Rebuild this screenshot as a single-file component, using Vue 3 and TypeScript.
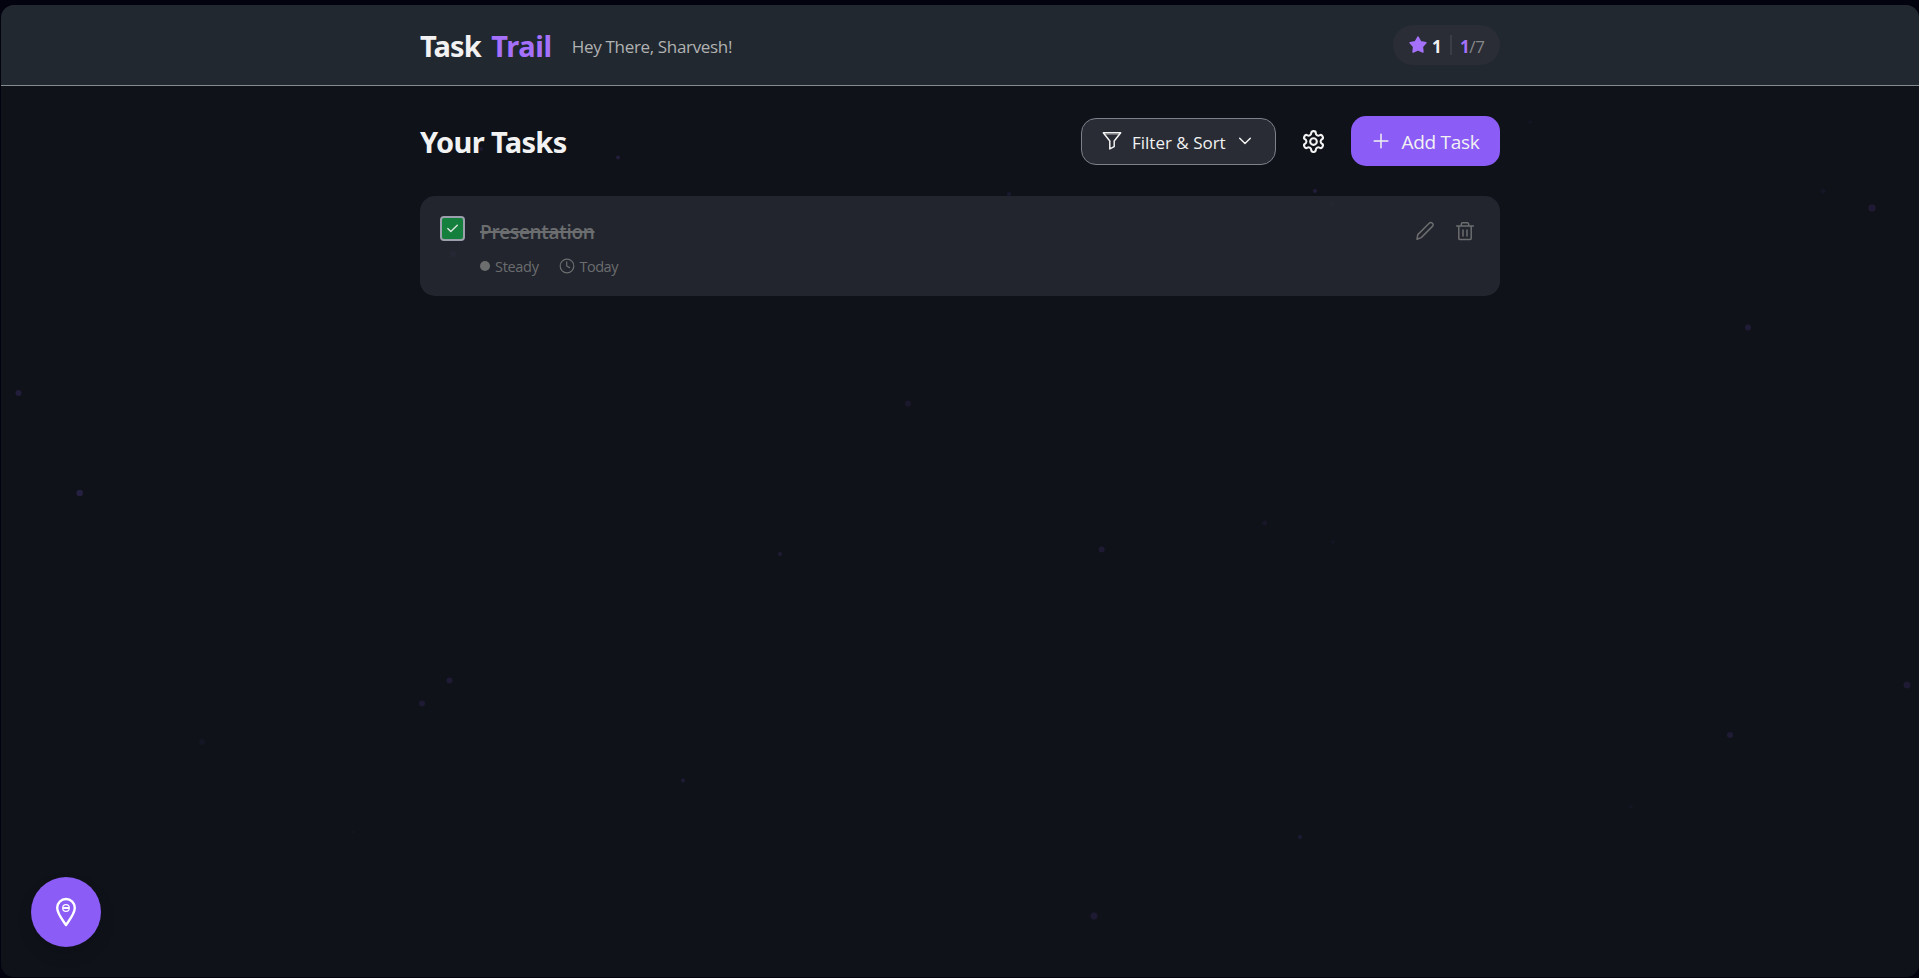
<script setup lang="ts">
interface Particle { x: number; y: number; size: number; alpha: number }

interface Task { id: number; title: string; effort: string; due: string; done: boolean }

const user = 'Sharvesh'
const stars = 1
const completed = 1
const goal = 7

const tasks: Task[] = [
  { id: 1, title: 'Presentation', effort: 'Steady', due: 'Today', done: true },
]

const particles: Particle[] = [
  { x: 18.5, y: 393, size: 6, alpha: 0.15 },
  { x: 79.7, y: 493, size: 6.5, alpha: 0.18 },
  { x: 202, y: 742, size: 6, alpha: 0.05 },
  { x: 353, y: 832, size: 3, alpha: 0.04 },
  { x: 422, y: 703.5, size: 6, alpha: 0.12 },
  { x: 449.5, y: 680.5, size: 6, alpha: 0.13 },
  { x: 453, y: 254, size: 6, alpha: 0.14 },
  { x: 481, y: 149, size: 4, alpha: 0.12 },
  { x: 618, y: 157.5, size: 4, alpha: 0.15 },
  { x: 683, y: 780.5, size: 4, alpha: 0.13 },
  { x: 780, y: 554, size: 4, alpha: 0.13 },
  { x: 908, y: 403.5, size: 6, alpha: 0.09 },
  { x: 1009, y: 194, size: 4, alpha: 0.1 },
  { x: 1094, y: 916, size: 7, alpha: 0.12 },
  { x: 1101.7, y: 549.5, size: 6, alpha: 0.12 },
  { x: 1264.7, y: 523, size: 5, alpha: 0.07 },
  { x: 1300, y: 837, size: 4, alpha: 0.12 },
  { x: 1315, y: 191, size: 4, alpha: 0.15 },
  { x: 1332, y: 204, size: 5, alpha: 0.1 },
  { x: 1333, y: 542, size: 4, alpha: 0.04 },
  { x: 1530, y: 122, size: 4, alpha: 0.04 },
  { x: 1631, y: 806.6, size: 4, alpha: 0.04 },
  { x: 1730, y: 735, size: 6, alpha: 0.13 },
  { x: 1748, y: 327.5, size: 6, alpha: 0.14 },
  { x: 1823, y: 191, size: 5, alpha: 0.06 },
  { x: 1872, y: 208, size: 7.5, alpha: 0.12 },
  { x: 1907, y: 685, size: 7, alpha: 0.12 },
]
</script>

<template>
  <div class="frame">
    <div class="window">
      <svg class="particles" width="1919" height="978" aria-hidden="true">
        <circle
          v-for="(p, i) in particles"
          :key="i"
          :cx="p.x"
          :cy="p.y"
          :r="p.size / 2"
          fill="#8b5cf6"
          :fill-opacity="p.alpha"
        />
      </svg>

      <header class="header">
        <div class="container header-row">
          <h1 class="brand"><span class="brand-a">Task</span> <span class="brand-b">Trail</span></h1>
          <p class="greeting">Hey There, {{ user }}!</p>
          <div class="stats">
            <svg class="star" viewBox="0 0 20 20" width="20" height="20">
              <path d="M10 2.200l2.700 4.700 5.200.9-3.600 3.800.6 5.400-4.900-2.200L5.100 17l.6-5.400L2.100 7.800l5.200-.9z" />
            </svg>
            <b class="star-count">{{ stars }}</b>
            <span class="divider"></span>
            <span class="progress"><b>{{ completed }}</b>/{{ goal }}</span>
          </div>
        </div>
      </header>

      <main class="container main">
        <div class="toolbar">
          <h2 class="heading">Your Tasks</h2>
          <button class="filter" type="button">
            <svg viewBox="0 0 22 22" width="22" height="22">
              <path d="M2.300 2.800h17.400L13.200 11v5.600l-4.400 2.300V11z" />
              <path d="M3.500 4.300h15" class="faint" />
            </svg>
            <span>Filter &amp; Sort</span>
            <svg class="caret" viewBox="0 0 14 14" width="14" height="14">
              <path d="M1.700 4.200L7 9.500l5.300-5.300" />
            </svg>
          </button>
          <button class="gear" type="button" aria-label="Settings">
            <svg viewBox="0 0 24 24" width="25" height="25">
              <path d="M12.220 2h-.44a2 2 0 0 0-2 2v.18a2 2 0 0 1-1 1.730l-.43.25a2 2 0 0 1-2 0l-.15-.08a2 2 0 0 0-2.730.73l-.22.38a2 2 0 0 0 .73 2.730l.15.1a2 2 0 0 1 1 1.720v.51a2 2 0 0 1-1 1.740l-.15.09a2 2 0 0 0-.73 2.730l.22.38a2 2 0 0 0 2.730.73l.15-.08a2 2 0 0 1 2 0l.43.25a2 2 0 0 1 1 1.730V20a2 2 0 0 0 2 2h.44a2 2 0 0 0 2-2v-.18a2 2 0 0 1 1-1.730l.43-.25a2 2 0 0 1 2 0l.15.08a2 2 0 0 0 2.730-.73l.22-.39a2 2 0 0 0-.73-2.730l-.15-.08a2 2 0 0 1-1-1.740v-.5a2 2 0 0 1 1-1.740l.15-.09a2 2 0 0 0 .73-2.730l-.22-.38a2 2 0 0 0-2.730-.73l-.15.08a2 2 0 0 1-2 0l-.43-.25a2 2 0 0 1-1-1.730V4a2 2 0 0 0-2-2z" />
              <circle cx="12" cy="12" r="3.200" />
            </svg>
          </button>
          <button class="add" type="button">
            <svg viewBox="0 0 16 16" width="16" height="16"><path d="M8 1.200v13.600M1.200 8h13.600" /></svg>
            <span>Add Task</span>
          </button>
        </div>

        <article v-for="task in tasks" :key="task.id" class="card">
          <span class="check">
            <svg v-if="task.done" viewBox="0 0 21 21" width="21" height="21">
              <path d="M5.800 10.600l3 3L15.300 7.300" />
            </svg>
          </span>
          <div class="body">
            <h3 class="title">{{ task.title }}</h3>
            <div class="meta">
              <span class="dot"></span>
              <span class="effort">{{ task.effort }}</span>
              <svg class="clock" viewBox="0 0 16 16" width="16" height="16">
                <circle cx="8" cy="8" r="6.800" />
                <path d="M7.700 3.800V8l2.900 1.600" />
              </svg>
              <span class="due">{{ task.due }}</span>
            </div>
          </div>
          <div class="tools">
            <svg viewBox="0 0 20 20" width="20" height="20">
              <path d="M2 18.200l.8-4.600L14.200 2.200a2.100 2.100 0 0 1 3.200 0 2.100 2.100 0 0 1 0 3.200L6.200 16.600z" />
            </svg>
            <svg viewBox="0 0 20 20" width="20" height="20">
              <path d="M1.600 5h16.800M6.300 4.800V3.200a1.400 1.400 0 0 1 1.400-1.400h4.600a1.400 1.400 0 0 1 1.400 1.400v1.600M3.800 5v12.600a1 1 0 0 0 1 1h10.400a1 1 0 0 0 1-1V5M8 9v6M12 9v6" />
            </svg>
          </div>
        </article>
      </main>

      <button class="fab" type="button" aria-label="Show trail">
        <svg viewBox="0 0 24 30" width="24" height="30">
          <path d="M12 28C9.500 24.200 3.200 17 3.200 10.800a8.800 8.800 0 0 1 17.600 0C20.800 17 14.500 24.200 12 28z" />
          <circle cx="12" cy="11" r="3.300" class="ring" />
          <path d="M9.700 11h4.600" class="slot" />
        </svg>
      </button>
    </div>
  </div>
</template>

<style>
html,
body {
  margin: 0;
  background: #02030f;
}
</style>

<style scoped>
* {
  box-sizing: border-box;
  margin: 0;
}

.frame {
  height: 978px;
  padding: 5px 0 1px 1px;
  overflow: hidden;
  font-family: "Open Sans", "Noto Sans", sans-serif;
  color: #f2f2f2;
}

.window {
  position: relative;
  height: 972px;
  border-radius: 13px;
  overflow: hidden;
  background: #0f1219;
}

svg {
  display: block;
  flex: none;
  fill: none;
  stroke: currentColor;
  stroke-width: 1.5;
  stroke-linecap: round;
  stroke-linejoin: round;
}

.particles {
  position: absolute;
  left: -1px;
  top: -5px;
  stroke: none;
}

button {
  border: 0;
  padding: 0;
  background: none;
  color: inherit;
  font-family: inherit;
}

.container {
  position: relative;
  width: 1080px;
  margin: 0 auto;
}

.header {
  position: relative;
  height: 81px;
  background: #212830;
  border-bottom: 1px solid #858992;
}

.header-row {
  display: flex;
  align-items: center;
  height: 80px;
}

.brand {
  display: flex;
  gap: 10.5px;
  padding-top: 2px;
  font: 700 29px/40px "Noto Sans", sans-serif;
}

.brand-a {
  letter-spacing: -0.9px;
}

.brand-b {
  letter-spacing: -0.35px;
  color: #a571fb;
}

.greeting {
  margin-left: 20px;
  padding-top: 3px;
  font-size: 17px;
  line-height: 24px;
  letter-spacing: -0.33px;
  color: #b1b2b2;
}

.stats {
  display: flex;
  align-items: center;
  width: 107px;
  height: 40px;
  margin-left: auto;
  padding-left: 15px;
  border-radius: 20px;
  background: #2a2d35;
  font-size: 17px;
  line-height: 24px;
}

.star {
  fill: #a571fb;
  stroke: #a571fb;
  stroke-width: 1.6;
}

.star-count {
  width: 10px;
  margin-left: 4px;
  padding-top: 3px;
}

.divider {
  width: 2px;
  height: 20px;
  margin-left: 8px;
  background: #393d48;
}

.progress {
  margin-left: 8px;
  padding-top: 3px;
  letter-spacing: -0.4px;
  color: #858788;
}

.progress b {
  color: #a571fb;
}

.main {
  padding-top: 30px;
}

.toolbar {
  display: flex;
  align-items: center;
  height: 50px;
}

.heading {
  padding-top: 1px;
  font: 700 29px/40px "Noto Sans", sans-serif;
  letter-spacing: -0.65px;
}

.filter {
  display: flex;
  align-items: center;
  width: 195px;
  height: 47px;
  margin-left: auto;
  padding-left: 19px;
  border: 1px solid #7d818a;
  border-radius: 15px;
  background: #292c34;
  font-size: 17px;
}

.filter span {
  width: 95px;
  margin: 2px 0 0 9px;
  white-space: nowrap;
  text-align: left;
}

.filter .faint {
  stroke-width: 1;
  opacity: 0.4;
}

.caret {
  margin: -1px 0 0 11px;
}

.gear {
  margin: 0 25px;
}

.gear svg {
  stroke-width: 2;
}

.add {
  display: flex;
  align-items: center;
  width: 149px;
  height: 50px;
  padding-left: 22px;
  border-radius: 15px;
  background: #8b5cf6;
  font-size: 19px;
  font-weight: 500;
  letter-spacing: -0.3px;
}

.add span {
  margin: 2px 0 0 12.5px;
}

.card {
  display: flex;
  height: 100px;
  margin-top: 30px;
  padding: 20px;
  border-radius: 15px;
  background: rgba(39, 43, 51, 0.8);
  color: #6b6d6e;
}

.check {
  width: 25px;
  height: 25px;
  border: 2px solid #9ca0ac;
  border-radius: 4px;
  background: #15803d;
  color: #d9e5dd;
}

.check svg {
  stroke-width: 1.4;
}

.body {
  margin-left: 15px;
}

.title {
  padding-top: 3px;
  font-size: 19px;
  font-weight: 600;
  line-height: 26px;
  letter-spacing: -0.3px;
  text-decoration: line-through;
  text-decoration-thickness: 2px;
}

.meta {
  display: flex;
  align-items: center;
  height: 20px;
  margin-top: 11px;
  font-size: 14.5px;
  line-height: 20px;
}

.dot {
  width: 10px;
  height: 10px;
  border-radius: 50%;
  background: currentColor;
}

.effort {
  width: 45px;
  margin: 1px 0 0 5px;
  letter-spacing: -0.3px;
}

.clock {
  margin-left: 18.5px;
  stroke-width: 1.2;
}

.due {
  margin: 1px 0 0 5px;
  letter-spacing: -0.5px;
}

.tools {
  display: flex;
  gap: 20px;
  margin: 5px 5px 0 auto;
}

.fab {
  position: absolute;
  left: 30px;
  bottom: 30px;
  display: flex;
  align-items: center;
  justify-content: center;
  width: 70px;
  height: 70px;
  border-radius: 50%;
  background: #8b5cf6;
  box-shadow: 0 8px 16px rgba(0, 0, 0, 0.12);
  color: #fff;
}

.fab svg {
  stroke-width: 2.4;
}

.fab .ring {
  stroke-width: 1.2;
}

.fab .slot {
  stroke-width: 2;
}
</style>
